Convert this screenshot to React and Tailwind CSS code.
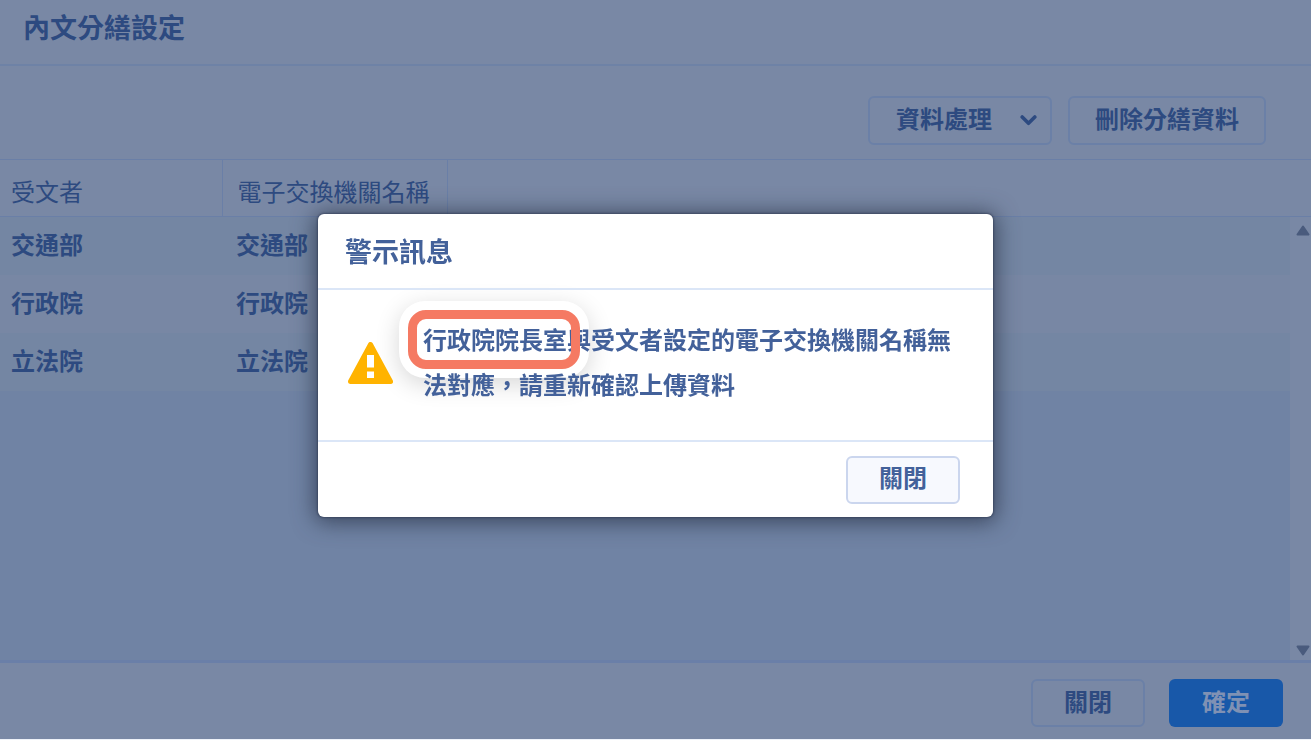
const rows = [
  { receiver: "交通部", agency: "交通部" },
  { receiver: "行政院", agency: "行政院" },
  { receiver: "立法院", agency: "立法院" },
];

const outlineButton =
  "rounded-md border-2 border-[#6b80a7] text-2xl leading-6 font-bold text-[#2d4a80]";

function ArrowUp({ className }) {
  return (
    <svg viewBox="0 0 14 11" className={className} aria-hidden="true">
      <path
        d="M7 1.5 L12.5 9.5 H1.5 Z"
        fill="#4a5b7d"
        stroke="#4a5b7d"
        strokeWidth="2"
        strokeLinejoin="round"
      />
    </svg>
  );
}

function PageHeader() {
  return (
    <header className="flex h-[66px] items-center border-b-2 border-[#6e82a6] px-[23px] pb-2.5">
      <h1 className="text-[27px] leading-8 font-bold">內文分繕設定</h1>
    </header>
  );
}

function Toolbar() {
  return (
    <div className="flex justify-end gap-4 pt-[30px] pr-[45px] pb-[14px]">
      <button
        type="button"
        aria-haspopup="menu"
        className={`${outlineButton} flex h-[49px] items-center gap-7 pb-1.5 pr-[13px] pl-[26px]`}
      >
        資料處理
        <svg viewBox="0 0 17 11" className="mt-1.5 h-[11px] w-[17px]" aria-hidden="true">
          <path
            d="M2.2 2 L8.5 8.3 L14.8 2"
            fill="none"
            stroke="#2d4a80"
            strokeWidth="3.6"
            strokeLinecap="round"
            strokeLinejoin="round"
          />
        </svg>
      </button>
      <button type="button" className={`${outlineButton} h-[49px] px-[25px] pb-1.5`}>
        刪除分繕資料
      </button>
    </div>
  );
}

function RecipientTable() {
  return (
    <table className="w-full table-fixed border-collapse text-left text-2xl leading-6">
      <colgroup>
        <col className="w-[222px]" />
        <col className="w-[225px]" />
        <col />
      </colgroup>
      <thead className="bg-[#7988a5]">
        <tr className="h-[57px] border-y border-[#6a7fa7]">
          <th scope="col" className="border-r border-[#6a7fa7] pt-1.5 pl-[11px] font-normal">
            受文者
          </th>
          <th
            scope="col"
            className="border-r border-[#6a7fa7] pt-1.5 pl-[15px] font-normal whitespace-nowrap"
          >
            電子交換機關名稱
          </th>
          <td />
        </tr>
      </thead>
      <tbody className="font-bold">
        {rows.map((row) => (
          <tr key={row.receiver} className="h-[58px] odd:bg-[#7486a3] even:bg-[#7887a4]">
            <td className="pb-1 pl-[11px]">{row.receiver}</td>
            <td className="pb-1 pl-[14px]">{row.agency}</td>
            <td />
          </tr>
        ))}
      </tbody>
    </table>
  );
}

function PageFooter() {
  return (
    <footer className="flex items-center justify-end gap-6 border-t-[3px] border-[#6a7fa8] pt-4 pr-7 pb-3">
      <button type="button" className={`${outlineButton} h-12 w-[114px] pb-1`}>
        關閉
      </button>
      <button
        type="button"
        className="h-12 w-[114px] rounded-md bg-[#1858a9] pb-1 text-2xl leading-6 font-bold text-[#7f91b4]"
      >
        確定
      </button>
    </footer>
  );
}

function AlertDialog() {
  return (
    <div className="fixed inset-0 flex items-start justify-center pt-[214px]">
      <section
        role="alertdialog"
        aria-modal="true"
        aria-labelledby="alert-title"
        aria-describedby="alert-message"
        className="isolate w-[675px] rounded-md bg-white text-[#43619a] shadow-[0_2px_22px_3px_rgba(40,50,70,0.75),0_0_2px_1px_rgba(50,62,90,0.6)]"
      >
        <h2
          id="alert-title"
          className="border-b-2 border-[#dbe6f7] px-[27px] py-5 text-[27px] leading-[34px] font-bold"
        >
          警示訊息
        </h2>
        <div className="flex items-center gap-[30px] border-b-2 border-[#dbe6f7] pt-[26px] pr-8 pb-[34px] pl-[30px]">
          <svg viewBox="0 0 45 42" className="mt-1 h-[42px] w-[45px] shrink-0" aria-hidden="true">
            <path
              d="M22.5 2.5 L42.5 39.5 H2.5 Z"
              fill="#ffb300"
              stroke="#ffb300"
              strokeWidth="5"
              strokeLinejoin="round"
            />
            <rect x="19" y="13" width="7" height="12.5" fill="#fff" />
            <rect x="19" y="29.5" width="7" height="6.5" fill="#fff" />
          </svg>
          <div className="relative">
            <span className="absolute -top-[15px] -left-6 -z-10 h-[77px] w-[190px] rounded-[26px] bg-white shadow-[0_6px_24px_rgba(0,0,0,0.16)]" />
            <p id="alert-message" className="text-2xl leading-[45px] font-bold">
              行政院院長室與受文者設定的電子交換機關名稱無法對應，請重新確認上傳資料
            </p>
            <span className="absolute -top-1.5 -left-[15px] h-[59px] w-[172px] rounded-[18px] border-[9px] border-[#f57a63]" />
          </div>
        </div>
        <div className="flex justify-end pt-[14px] pr-[33px] pb-[13px]">
          <button
            type="button"
            className="h-12 w-[114px] rounded-md border-2 border-[#cbd6ee] bg-[#f7f9fe] pb-1.5 text-2xl leading-6 font-bold"
          >
            關閉
          </button>
        </div>
      </section>
    </div>
  );
}

export default function App() {
  return (
    <div className="min-h-screen bg-[#eef2f9] pb-px font-['Noto_Sans_CJK_TC',sans-serif]" lang="zh-Hant">
      <main className="flex min-h-[calc(100vh-1px)] flex-col bg-[#7988a5] text-[#2d4a80]">
        <PageHeader />
        <Toolbar />
        <div className="relative grow bg-[#7083a4]">
          <RecipientTable />
          <div className="absolute top-[58px] right-0 bottom-0 flex w-[21px] flex-col items-end justify-between bg-[#7988a5] pt-2 pr-px pb-1">
            <ArrowUp className="h-[11px] w-[14px]" />
            <ArrowUp className="h-[11px] w-[14px] rotate-180" />
          </div>
        </div>
        <PageFooter />
      </main>
      <AlertDialog />
    </div>
  );
}
